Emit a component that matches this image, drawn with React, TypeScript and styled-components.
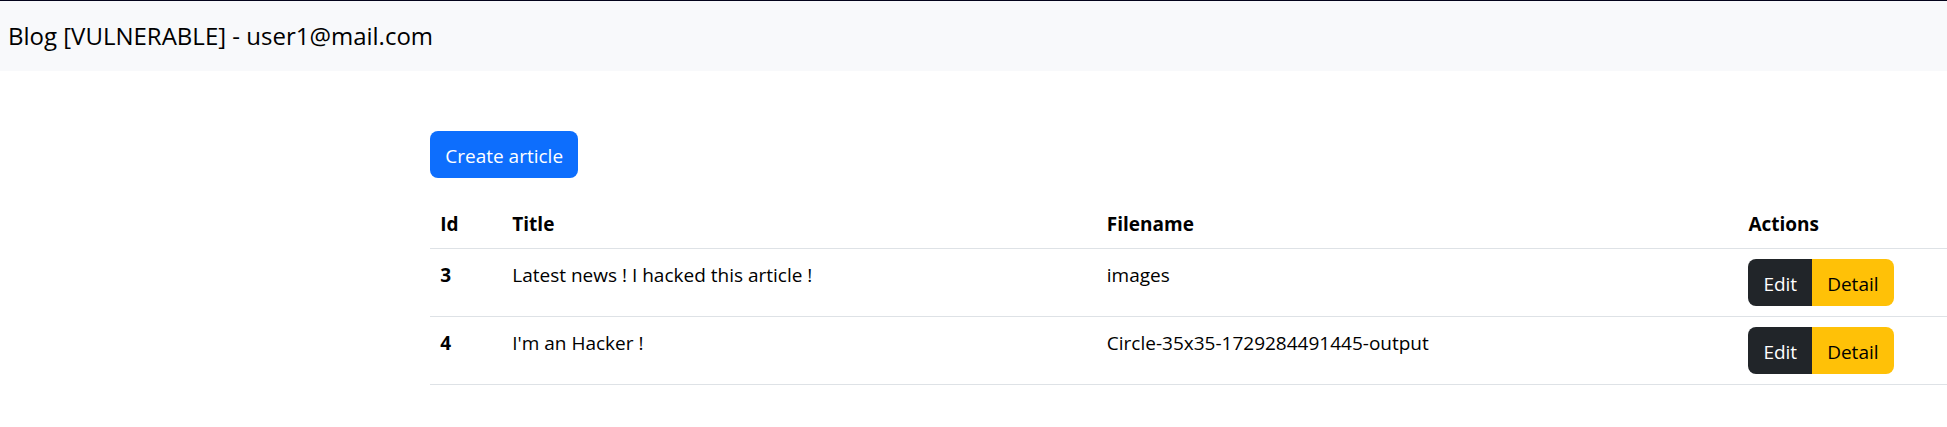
import React from "react";
import styled, { createGlobalStyle } from "styled-components";

const GlobalStyle = createGlobalStyle`
  *, *::before, *::after { box-sizing: border-box; }
  body {
    margin: 0;
    background: #fff;
    color: #000;
    font-family: "Segoe UI", "Open Sans", "Noto Sans", sans-serif;
    font-size: 19px;
    line-height: 30px;
  }
`;

const Navbar = styled.nav`
  display: flex;
  align-items: center;
  min-height: 71px;
  padding: 0 8px;
  border-top: 1px solid #03031b;
  background: #f8f9fb;
`;

const Brand = styled.a`
  color: #000;
  font-size: 24px;
  line-height: 38px;
  text-decoration: none;
  white-space: nowrap;
`;

const Main = styled.main`
  display: flex;
  flex-direction: column;
  align-items: flex-start;
  gap: 20px;
  margin-left: 22.1%;
  padding: 60px 0 40px;
`;

type Tone = "primary" | "dark" | "warning";

const tones: Record<Tone, { background: string; color: string }> = {
  primary: { background: "#0d6efd", color: "#fff" },
  dark: { background: "#212529", color: "#fff" },
  warning: { background: "#ffc107", color: "#000" },
};

const Button = styled.button<{ $tone: Tone }>`
  padding: 10px 15px 7px;
  border: 0;
  border-radius: 8px;
  background: ${({ $tone }) => tones[$tone].background};
  color: ${({ $tone }) => tones[$tone].color};
  font: inherit;
  white-space: nowrap;
  cursor: pointer;
`;

const ButtonGroup = styled.div`
  display: inline-flex;
  vertical-align: top;

  ${Button}:first-child {
    border-top-right-radius: 0;
    border-bottom-right-radius: 0;
  }

  ${Button}:last-child {
    border-top-left-radius: 0;
    border-bottom-left-radius: 0;
  }
`;

const Table = styled.table`
  width: 100%;
  table-layout: fixed;
  border-collapse: separate;
  border-spacing: 0;
  text-align: left;

  th, td {
    padding: 11px 10px 9px;
    border-bottom: 1px solid #dee2e6;
    vertical-align: top;
  }

  th { font-weight: 700; }
`;

const ActionsCell = styled.td`
  ${Table} && {
    padding: 10px;
  }
`;

const Column = styled.col<{ $width: string }>`
  width: ${({ $width }) => $width};
`;

const articles = [
  { id: 3, title: "Latest news ! I hacked this article !", filename: "images" },
  { id: 4, title: "I'm an Hacker !", filename: "Circle-35x35-1729284491445-output" },
];

export default function App() {
  return (
    <>
      <GlobalStyle />
      <Navbar>
        <Brand href="#">Blog [VULNERABLE] - user1@mail.com</Brand>
      </Navbar>
      <Main>
        <Button type="button" $tone="primary">Create article</Button>
        <Table>
          <colgroup>
            <Column $width="72px" />
            <Column $width="39.2%" />
            <Column $width="42.3%" />
            <Column $width="auto" />
          </colgroup>
          <thead>
            <tr>
              <th scope="col">Id</th>
              <th scope="col">Title</th>
              <th scope="col">Filename</th>
              <th scope="col">Actions</th>
            </tr>
          </thead>
          <tbody>
            {articles.map(({ id, title, filename }) => (
              <tr key={id}>
                <th scope="row">{id}</th>
                <td>{title}</td>
                <td>{filename}</td>
                <ActionsCell>
                  <ButtonGroup role="group" aria-label={`Article ${id}`}>
                    <Button type="button" $tone="dark">Edit</Button>
                    <Button type="button" $tone="warning">Detail</Button>
                  </ButtonGroup>
                </ActionsCell>
              </tr>
            ))}
          </tbody>
        </Table>
      </Main>
    </>
  );
}
